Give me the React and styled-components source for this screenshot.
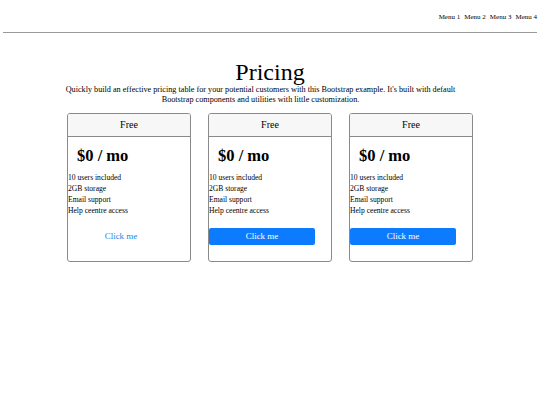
import React from 'react';
import styled, { createGlobalStyle } from 'styled-components';

const GlobalStyle = createGlobalStyle`
    body {
        margin: 0;
        background: #ffffff;
        font-family: 'Liberation Serif', 'Times New Roman', serif;
        color: #000000;
    }
`;

const Nav = styled.div`
    display: flex;
    justify-content: flex-end;
    gap: 4px;
    padding: 12px 3px 0 0;
    height: 20px;
    box-sizing: border-box;
    font-size: 7px;
    line-height: 10px;
`;

const Rule = styled.hr`
    margin: 12px 3px 0 3px;
    border: none;
    border-top: 1px solid #9a9a9a;
    height: 0;
`;

const Container = styled.div`
    width: 406px;
    margin: 0 auto;
    text-align: center;
`;

const Title = styled.h1`
    margin: 26px 0 0 0;
    font-size: 24px;
    font-weight: normal;
    line-height: 26px;
`;

const Lead = styled.p`
    margin: 0 17px 0 -2px;
    font-size: 8.2px;
    line-height: 10px;
`;

const Deck = styled.div`
    display: grid;
    grid-template-columns: repeat(3, 124px);
    justify-content: space-between;
    margin-top: 8px;
`;

const Card = styled.div`
    height: 149px;
    border: 1px solid #8a8a8a;
    border-radius: 3px;
    box-sizing: border-box;
    text-align: left;
    overflow: hidden;
`;

const CardHeader = styled.div`
    height: 22px;
    line-height: 22px;
    text-align: center;
    font-size: 10px;
    background: #f7f7f7;
    border-bottom: 1px solid #8a8a8a;
`;

const Price = styled.div`
    padding: 8px 0 0 9px;
    font-size: 16.5px;
    font-weight: bold;
    line-height: 22px;
`;

const Features = styled.ul`
    list-style: none;
    margin: 5px 0 0 0;
    padding: 0;
    font-size: 7.6px;
    line-height: 11px;
`;

const Button = styled.div`
    margin-top: 12px;
    width: 106px;
    height: 17px;
    line-height: 17px;
    text-align: center;
    font-size: 9px;
    border-radius: 2px;
    color: ${(p) => (p.$primary ? '#ffffff' : '#1a86e8')};
    background: ${(p) => (p.$primary ? '#0d7bfe' : 'transparent')};
`;

const plans = [
    { primary: false },
    { primary: true },
    { primary: true },
];

export default function App() {
    return (
        <>
            <GlobalStyle />
            <Nav>
                <span>Menu 1</span>
                <span>Menu 2</span>
                <span>Menu 3</span>
                <span>Menu 4</span>
            </Nav>
            <Rule />
            <Container>
                <Title>Pricing</Title>
                <Lead>
                    Quickly build an effective pricing table for your potential customers with this
                    Bootstrap example. It's built with default Bootstrap components and utilities with
                    little customization.
                </Lead>
                <Deck>
                    {plans.map((plan, i) => (
                        <Card key={i}>
                            <CardHeader>Free</CardHeader>
                            <Price>$0 / mo</Price>
                            <Features>
                                <li>10 users included</li>
                                <li>2GB storage</li>
                                <li>Email support</li>
                                <li>Help ceentre access</li>
                            </Features>
                            <Button $primary={plan.primary}>Click me</Button>
                        </Card>
                    ))}
                </Deck>
            </Container>
        </>
    );
}
